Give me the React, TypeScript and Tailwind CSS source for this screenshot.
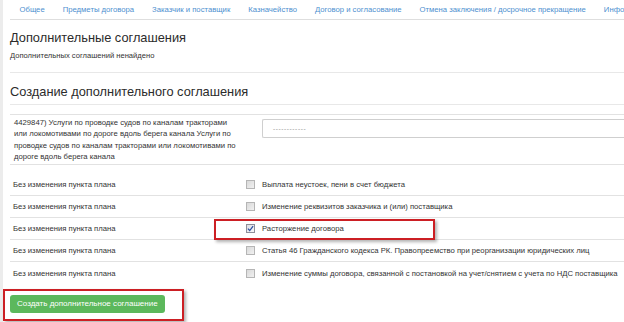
import React from "react";

const tabs = [
  "Общее",
  "Предметы договора",
  "Заказчик и поставщик",
  "Казначейство",
  "Договор и согласование",
  "Отмена заключения / досрочное прекращение",
  "Информация",
];

const planRows = [
  { label: "Выплата неустоек, пени в счет бюджета", checked: false },
  { label: "Изменение реквизитов заказчика и (или) поставщика", checked: false },
  { label: "Расторжение договора", checked: true },
  {
    label: "Статья 46 Гражданского кодекса РК. Правопреемство при реорганизации юридических лиц",
    checked: false,
  },
  {
    label:
      "Изменение суммы договора, связанной с постановкой на учет/снятием с учета по НДС поставщика",
    checked: false,
  },
];

const Checkbox: React.FC<{ checked: boolean }> = ({ checked }) => (
  <span
    className={
      checked
        ? "flex h-[9px] w-[9px] shrink-0 items-center justify-center border border-[#8e8f9a] bg-gradient-to-br from-[#dcdde3] to-[#f7f7f9]"
        : "flex h-[9px] w-[9px] shrink-0 items-center justify-center border border-[#b5b5b5] bg-gradient-to-br from-[#d9d9d9] to-[#f1f1f1]"
    }
  >
    {checked && (
      <svg viewBox="0 0 8 8" className="h-[7px] w-[7px]">
        <path d="M1 4.2 L3.1 6.3 L7 1.2" fill="none" stroke="#2b4ea0" strokeWidth="1.4" />
      </svg>
    )}
  </span>
);

export default function App() {
  return (
    <div className="relative flex h-[322px] w-[624px] overflow-hidden bg-white font-['Liberation_Sans',Arial,sans-serif] text-[#333]">
      <div className="w-[3px] shrink-0 bg-[#ececec]" />
      <div className="min-w-0 flex-1 pl-[7px]">
        <ul className="flex h-[20px] items-center whitespace-nowrap border-b border-[#dedede] pl-[0.5px] text-[7.7px] text-[#4d8fcf]">
          {tabs.map((t) => (
            <li key={t} className="px-[9px]">
              {t}
            </li>
          ))}
        </ul>

        <h2 className="mt-[9px] text-[12.8px] leading-[17px] text-[#2b2b2b]">
          Дополнительные соглашения
        </h2>
        <p className="mt-[4px] text-[7.6px] leading-[11px]">
          Дополнительных соглашений ненайдено
        </p>
        <div className="mt-[11px] border-t border-[#e8e8e8]" />

        <h2 className="mt-[10px] text-[12.8px] leading-[17px] text-[#2b2b2b]">
          Создание дополнительного соглашения
        </h2>
        <div className="mt-[4px] border-t border-[#e8e8e8]" />

        <div className="mt-[9px] border-t border-[#e2e2e2] text-[7.7px]">
          <div className="grid h-[50px] grid-cols-[236px_1fr] border-b border-[#e2e2e2]">
            <div className="pl-[4px] pr-[6px] pt-[2px] leading-[11.4px]">
              4429847) Услуги по проводке судов по каналам тракторами или локомотивами по дороге
              вдоль берега канала Услуги по проводке судов по каналам тракторами или локомотивами
              по дороге вдоль берега канала
            </div>
            <div className="pl-[16px] pt-[4px]">
              <div className="flex h-[19px] items-center rounded-l-[2px] border-y border-l border-[#cfcfcf] pl-[10px] text-[6.5px] tracking-[0.6px] text-[#9a9a9a]">
                ------------
              </div>
            </div>
          </div>

          {planRows.map((r, i) => (
            <div
              key={r.label}
              className={
                "grid grid-cols-[236px_1fr] items-center leading-[11px] " +
                (i === 0 ? "h-[31px] pt-[8px] " : "h-[22px] ") +
                (i < planRows.length - 1 ? "border-b border-[#e2e2e2]" : "")
              }
            >
              <div className="pl-[3px]">Без изменения пункта плана</div>
              <div className="flex items-center whitespace-nowrap">
                <Checkbox checked={r.checked} />
                <span className="ml-[7px]">{r.label}</span>
              </div>
            </div>
          ))}
        </div>

        <button className="mt-[11px] flex h-[18px] items-center rounded-[3px] bg-[#5cb85c] px-[7px] text-[8px] text-white">
          Создать дополнительное соглашение
        </button>
      </div>

      <div className="pointer-events-none absolute left-[214px] top-[219px] h-[21px] w-[221px] border-2 border-[#cc1f24] shadow-[2px_2px_3px_rgba(0,0,0,0.3)]" />
      <div className="pointer-events-none absolute left-[3px] top-[289px] h-[32px] w-[181px] border-2 border-[#cc1f24] shadow-[2px_2px_3px_rgba(0,0,0,0.3)]" />
    </div>
  );
}
